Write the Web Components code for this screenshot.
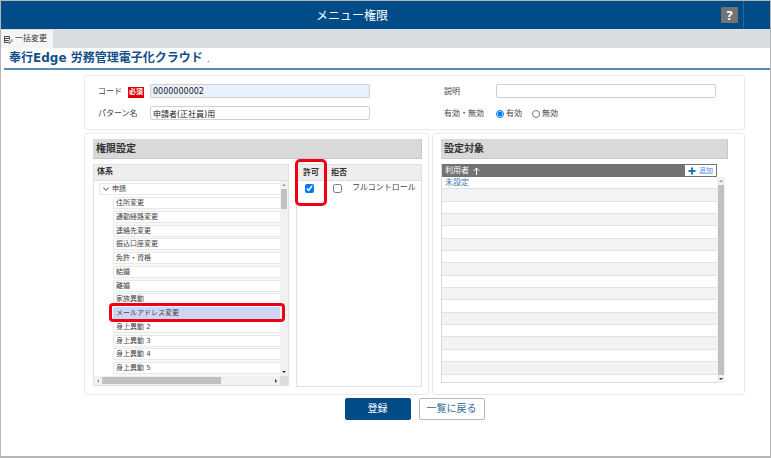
<!DOCTYPE html>
<html lang="ja">
<head>
<meta charset="utf-8">
<title>メニュー権限</title>
<style>
  body {
    margin: 0;
    font: 8px/12px "DejaVu Sans", "Noto Sans CJK JP", sans-serif;
    color: #444;
    background: #fff;
  }
</style>
</head>
<body>
<menu-permission-page></menu-permission-page>

<template id="page-template">
  <style>
    :host {
      display: flex;
      flex-direction: column;
      box-sizing: border-box;
      min-height: 100vh;
      border: 1px solid #b5b5b5;
      border-bottom-width: 2px;
    }
    main { padding: 5px 25px 0 83px; }
    .panels {
      display: grid;
      grid-template-columns: 345fr 313fr;
      gap: 3px;
      margin-top: 3px;
    }
    .lists {
      display: grid;
      grid-template-columns: 196fr 126fr;
      gap: 7px;
    }
    .actions {
      display: flex;
      justify-content: center;
      gap: 8px;
      margin-top: 3px;
    }
  </style>
  <app-header>メニュー権限</app-header>
  <tool-bar></tool-bar>
  <product-title>奉行Edge 労務管理電子化クラウド</product-title>
  <main>
    <pattern-form></pattern-form>
    <div class="panels">
      <section-panel heading="権限設定">
        <div class="lists">
          <menu-tree></menu-tree>
          <permission-list></permission-list>
        </div>
      </section-panel>
      <section-panel heading="設定対象">
        <user-table></user-table>
      </section-panel>
    </div>
    <div class="actions">
      <action-button primary>登録</action-button>
      <action-button>一覧に戻る</action-button>
    </div>
  </main>
</template>

<template id="header-template">
  <style>
    :host {
      display: flex;
      align-items: stretch;
      height: 28px;
      background: #004c88;
      color: #fff;
    }
    h1 {
      flex: 1;
      margin: 0;
      font-size: 12px;
      font-weight: 400;
      line-height: 30px;
      text-align: center;
    }
    .tools {
      display: flex;
      align-items: center;
      justify-content: flex-end;
      width: 67px;
      gap: 5px;
    }
    button {
      width: 17px;
      height: 16px;
      padding: 0;
      border: 0;
      border-radius: 1px;
      background: #737373;
      color: #fff;
      font: bold 13px/16px "Open Sans", sans-serif;
    }
    .end {
      align-self: stretch;
      width: 26px;
      border-left: 1px solid #2c6799;
    }
  </style>
  <h1><slot></slot></h1>
  <div class="tools">
    <button type="button" aria-label="ヘルプ">?</button>
    <span class="end"></span>
  </div>
</template>

<template id="toolbar-template">
  <style>
    :host {
      display: flex;
      height: 19px;
      background: #d9dddf;
    }
    button {
      display: flex;
      align-items: center;
      gap: 2px;
      margin-top: 1px;
      padding: 0 6px 0 2px;
      border: 0;
      background: #f5f5f5;
      color: #333;
      font: inherit;
    }
  </style>
  <button type="button">
    <svg width="10" height="9" viewBox="0 0 10 9" fill="none" stroke="#444">
      <path d="M6.500 4.500V1.500h-5v6h4M1.500 3.500h5M1.500 5.500h4.500"/>
      <path d="M6 8.500l.5-1.700L8.800 4.500l1 1-2.300 2.300z" stroke-width=".7"/>
    </svg>
    一括変更
  </button>
</template>

<template id="title-template">
  <style>
    :host {
      display: block;
      margin-left: 3px;
      padding-left: 5px;
      border-bottom: 2px solid #5a8cb4;
    }
    h2 {
      height: 20px;
      margin: 0;
      color: #14508a;
      font-size: 12px;
      line-height: 20px;
    }
    small { font-size: 8px; font-weight: 400; }
  </style>
  <h2><slot></slot> <small>.</small></h2>
</template>

<template id="form-template">
  <style>
    :host {
      display: block;
      border: 1px solid #e9e9e9;
      border-radius: 3px;
    }
    form {
      display: grid;
      grid-template-columns: 1fr 1fr;
      gap: 8px 74px;
      padding: 8px 28px 9px 13px;
    }
    .field {
      display: grid;
      grid-template-columns: 52px 1fr;
      align-items: center;
      height: 14px;
    }
    .name { display: flex; align-items: center; gap: 6px; padding-top: 2px; white-space: nowrap; }
    .required {
      padding: 0 1px;
      background: #e00000;
      color: #fff;
      font-size: 7px;
      font-weight: bold;
      line-height: 11px;
    }
    input[type=text] {
      box-sizing: border-box;
      width: 100%;
      height: 14px;
      padding: 0 2px;
      border: 1px solid #d0d0d0;
      border-radius: 2px;
      background: #fff;
      color: #222;
      font: inherit;
    }
    input#code { background: #e8f0fe; }
    .radios { display: flex; gap: 10px; padding-top: 2px; }
    .radios label { display: flex; align-items: center; gap: 2px; }
    input[type=radio] { width: 8px; height: 8px; margin: 0; }
  </style>
  <form>
    <div class="field">
      <div class="name"><label for="code">コード</label><span class="required">必須</span></div>
      <input type="text" id="code" value="0000000002">
    </div>
    <div class="field">
      <label class="name" for="note">説明</label>
      <input type="text" id="note">
    </div>
    <div class="field">
      <label class="name" for="pattern">パターン名</label>
      <input type="text" id="pattern" value="申請者(正社員)用">
    </div>
    <div class="field" role="radiogroup" aria-labelledby="status">
      <span class="name" id="status">有効・無効</span>
      <div class="radios">
        <label><input type="radio" name="status" checked>有効</label>
        <label><input type="radio" name="status">無効</label>
      </div>
    </div>
  </form>
</template>

<template id="panel-template">
  <style>
    :host {
      display: block;
      padding: 5px 6px 7px 8px;
      border: 1px solid #e9e9e9;
      border-radius: 3px;
    }
    :host([heading="設定対象"]) { padding-right: 16px; }
    h3 {
      box-sizing: border-box;
      height: 20px;
      margin: 0 0 5px;
      padding-left: 3px;
      border: 1px solid #c8c8c8;
      border-width: 0 1px 1px 0;
      background: #d9d9d9;
      color: #333;
      font-size: 10px;
      line-height: 19px;
    }
  </style>
  <h3></h3>
  <slot></slot>
</template>

<template id="scroll-template">
  <style>
    :host {
      display: flex;
      flex-direction: column;
      align-items: center;
      width: 8px;
      background: #f1f1f1;
    }
    :host([horizontal]) { flex-direction: row; width: auto; height: 9px; }
    svg { flex: none; width: 8px; height: 8px; }
    .track { display: flex; flex: 1; flex-direction: inherit; align-self: stretch; padding: 0 1px; }
    :host([horizontal]) .track { padding: 1px 0; }
    .thumb { flex: 0 0 var(--thumb, 50%); background: #c1c1c1; }
  </style>
  <svg viewBox="0 0 8 8"><path class="back"/></svg>
  <div class="track"><div class="thumb"></div></div>
  <svg viewBox="0 0 8 8"><path class="forward"/></svg>
</template>

<template id="tree-template">
  <style>
    :host {
      display: flex;
      flex-direction: column;
      box-sizing: border-box;
      height: 222px;
      border: 1px solid #e0e0e0;
      font-size: 7px;
    }
    h4 {
      box-sizing: border-box;
      height: 16px;
      margin: 0;
      padding-left: 3px;
      border-bottom: 1px solid #dedede;
      background: #eee;
      color: #333;
      font-size: 8px;
      line-height: 14px;
    }
    .view {
      display: grid;
      grid-template-columns: 1fr 8px;
      grid-template-rows: 1fr 9px;
      flex: 1;
      min-height: 0;
    }
    /* the marker reaches over the scroll bar, so only the bottom is clipped */
    .tree {
      min-width: 0;
      min-height: 0;
      padding: 2px 0 0 5px;
      clip-path: inset(0 -8px 0 0);
    }
    .row {
      box-sizing: border-box;
      height: 12px;
      padding-left: 2px;
      border: 1px solid #e8e8e8;
      border-right: 0;
      border-radius: 2px 0 0 2px;
      background: #fff;
      line-height: 10px;
      white-space: nowrap;
    }
    .parent { display: flex; align-items: center; gap: 2px; margin-bottom: 2px; }
    ul {
      display: grid;
      grid-auto-rows: 1fr;
      box-sizing: border-box;
      height: 179px;
      margin: 0 0 0 14px;
      padding: 0;
      background: #f7f8f8;
      list-style: none;
    }
    li { position: relative; }
    .selected .row { background: #ced6f5; border-color: #ced6f5; }
    .mark {
      position: absolute;
      inset: -4px -5px -1px -4px;
      border: 3px solid #f00014;
      border-radius: 4px;
      z-index: 1;
    }
    menu-scroll { --thumb: 11%; }
    menu-scroll[horizontal] { --thumb: 70%; }
    .corner { background: #dcdcdc; }
  </style>
  <h4>体系</h4>
  <div class="view">
    <div class="tree">
      <div class="row parent">
        <svg width="8" height="6" viewBox="0 0 8 6" fill="none" stroke="#555"><path d="M1.500 1.500L4 4.500 6.500 1.500"/></svg>
        申請
      </div>
      <ul></ul>
    </div>
    <menu-scroll></menu-scroll>
    <menu-scroll horizontal></menu-scroll>
    <div class="corner"></div>
  </div>
</template>

<template id="permission-template">
  <style>
    :host {
      display: block;
      box-sizing: border-box;
      height: 223px;
      position: relative;
      border: 1px solid #e0e0e0;
    }
    table { width: 100%; border-collapse: collapse; table-layout: fixed; }
    th, td { padding: 0; text-align: left; font-size: 8px; }
    th {
      height: 15px;
      border-bottom: 1px solid #dedede;
      background: #eee;
      color: #333;
      line-height: 14px;
    }
    th:first-child, td:first-child { width: 34px; padding-left: 6px; box-sizing: border-box; }
    th:nth-child(2), td:nth-child(2) { width: 21px; }
    td { height: 14px; white-space: nowrap; }
    input { display: block; width: 9px; height: 9px; margin: 0 2px; }
    .mark {
      position: absolute;
      top: -6px;
      left: -2px;
      box-sizing: border-box;
      width: 32px;
      height: 47px;
      border: 3px solid #f00014;
      border-radius: 5px;
    }
  </style>
  <table>
    <thead><tr><th>許可</th><th>拒否</th><th></th></tr></thead>
    <tbody>
      <tr>
        <td><input type="checkbox" aria-label="許可" checked></td>
        <td><input type="checkbox" aria-label="拒否"></td>
        <td>フルコントロール</td>
      </tr>
    </tbody>
  </table>
  <div class="mark"></div>
</template>

<template id="users-template">
  <style>
    :host { display: flex; margin-right: 3px; }
    .clip {
      flex: 1;
      box-sizing: border-box;
      height: 219px;
      overflow: hidden;
      border-bottom: 1px solid #dcdcdc;
      border-left: 1px solid #dcdcdc;
    }
    table { width: 100%; height: 223px; border-spacing: 0; }
    th { height: 13px; padding: 0; background: #737373; color: #fff; font-weight: 400; }
    .head { display: flex; align-items: center; gap: 4px; height: 13px; padding: 0 1px 0 3px; }
    button {
      display: flex;
      align-items: center;
      gap: 3px;
      height: 11px;
      margin-left: auto;
      padding: 0 3px;
      border: 0;
      background: #fff;
      color: #4a86e8;
      font: inherit;
      font-size: 7px;
    }
    td {
      box-sizing: border-box;
      height: 12px;
      padding: 0 0 0 3px;
      border-bottom: 1px solid #e2e2e2;
      line-height: 10px;
    }
    tbody tr:nth-child(even) { background: #f3f3f3; }
    a { display: block; color: #3d7ab5; text-decoration: none; }
    menu-scroll { margin-top: 13px; --thumb: 100%; }
  </style>
  <div class="clip">
    <table>
      <thead>
        <tr><th scope="col">
          <div class="head">
            利用者
            <svg width="7" height="8" viewBox="0 0 7 8" fill="none" stroke="#fff"><path d="M3.500 8V1M.8 3.800L3.500 1l2.700 2.800"/></svg>
            <button type="button">
              <svg width="8" height="8" viewBox="0 0 8 8" stroke="#2a72b0" stroke-width="2"><path d="M4 .5v7M.5 4h7"/></svg>
              追加
            </button>
          </div>
        </th></tr>
      </thead>
      <tbody></tbody>
    </table>
  </div>
  <menu-scroll></menu-scroll>
</template>

<template id="button-template">
  <style>
    :host { display: block; }
    button {
      box-sizing: border-box;
      width: 66px;
      height: 22px;
      padding: 0;
      border: 1px solid #b9b9b9;
      border-radius: 2px;
      background: #fff;
      color: #2e6a9e;
      font: inherit;
      font-size: 10px;
      line-height: 18px;
    }
    :host([primary]) button { border-color: #004c88; background: #004c88; color: #fff; }
  </style>
  <button type="button"><slot></slot></button>
</template>

<script>
  class BaseElement extends HTMLElement {
    constructor() {
      super();

      const template = document.getElementById(this.constructor.templateId);

      this.attachShadow({ mode: 'open' });
      this.shadowRoot.appendChild(template.content.cloneNode(true));
    }
  }

  class AppHeader extends BaseElement {
    static templateId = 'header-template';
  }

  class ToolBar extends BaseElement {
    static templateId = 'toolbar-template';
  }

  class ProductTitle extends BaseElement {
    static templateId = 'title-template';
  }

  class PatternForm extends BaseElement {
    static templateId = 'form-template';
  }

  class PermissionList extends BaseElement {
    static templateId = 'permission-template';
  }

  class ActionButton extends BaseElement {
    static templateId = 'button-template';
  }

  class SectionPanel extends BaseElement {
    static templateId = 'panel-template';

    connectedCallback() {
      this.shadowRoot.querySelector('h3').textContent = this.getAttribute('heading');
    }
  }

  class MenuScroll extends BaseElement {
    static templateId = 'scroll-template';

    connectedCallback() {
      const back = this.shadowRoot.querySelector('.back');
      const forward = this.shadowRoot.querySelector('.forward');
      const horizontal = this.hasAttribute('horizontal');

      back.setAttribute('d', horizontal ? 'M5 2v4L3 4z' : 'M2 5h4L4 3z');
      back.setAttribute('fill', '#999');
      forward.setAttribute('d', horizontal ? 'M3 2v4l2-2z' : 'M2 3h4L4 5z');
      forward.setAttribute('fill', '#333');
    }
  }

  const menuItems = [
    '住所変更', '通勤経路変更', '連絡先変更', '振込口座変更', '免許・資格', '結婚', '離婚',
    '家族異動', 'メールアドレス変更', '身上異動 2', '身上異動 3', '身上異動 4', '身上異動 5',
  ];

  class MenuTree extends BaseElement {
    static templateId = 'tree-template';

    connectedCallback() {
      const list = this.shadowRoot.querySelector('ul');

      menuItems.forEach((name) => {
        const item = document.createElement('li');
        item.innerHTML = `<div class="row">${name}</div>`;

        if (name === 'メールアドレス変更') {
          item.className = 'selected';
          item.innerHTML += '<div class="mark"></div>';
        }

        list.appendChild(item);
      });
    }
  }

  class UserTable extends BaseElement {
    static templateId = 'users-template';

    connectedCallback() {
      const body = this.shadowRoot.querySelector('tbody');

      // one link row, the rest are empty stripes
      for (let i = 0; i < 17; i++) {
        const row = body.insertRow();
        row.insertCell().innerHTML = i === 0 ? '<a href="#">未設定</a>' : '';
      }
    }
  }

  class MenuPermissionPage extends BaseElement {
    static templateId = 'page-template';
  }

  customElements.define('app-header', AppHeader);
  customElements.define('tool-bar', ToolBar);
  customElements.define('product-title', ProductTitle);
  customElements.define('pattern-form', PatternForm);
  customElements.define('section-panel', SectionPanel);
  customElements.define('menu-scroll', MenuScroll);
  customElements.define('menu-tree', MenuTree);
  customElements.define('permission-list', PermissionList);
  customElements.define('user-table', UserTable);
  customElements.define('action-button', ActionButton);
  customElements.define('menu-permission-page', MenuPermissionPage);
</script>
</body>
</html>
